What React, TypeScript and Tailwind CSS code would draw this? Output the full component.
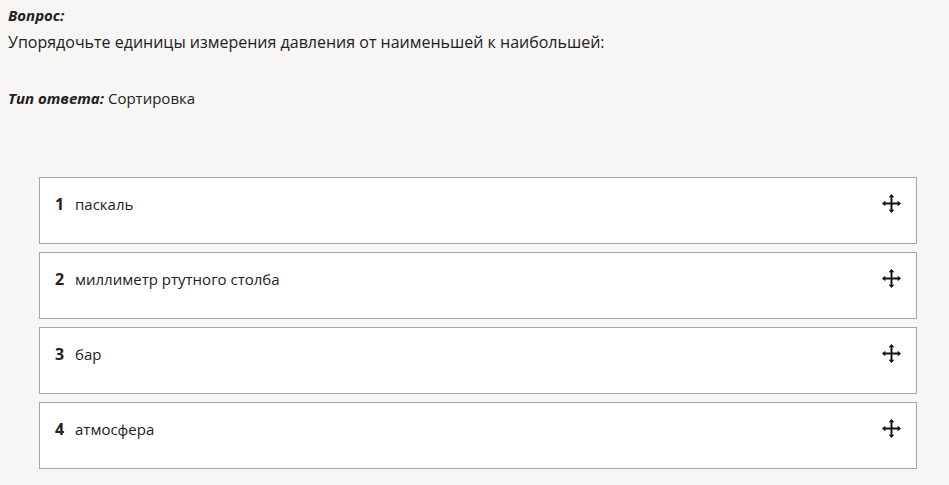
const items = ["паскаль", "миллиметр ртутного столба", "бар", "атмосфера"];

function MoveIcon() {
  return (
    <svg width="21" height="21" viewBox="0 0 22 22" className="text-[#111]">
      <path d="M11 3v16M3 11h16" stroke="currentColor" strokeWidth="2" />
      <path d="M11 1l3 3.5h-6z" fill="currentColor" />
      <path d="M11 21l3-3.5h-6z" fill="currentColor" />
      <path d="M1 11l3.5-3v6z" fill="currentColor" />
      <path d="M21 11l-3.5-3v6z" fill="currentColor" />
    </svg>
  );
}

export default function App() {
  return (
    <div className="min-h-[485px] bg-[#f7f6f5] px-2 pt-[4px] text-[#212121] font-['Open_Sans','Noto_Sans',sans-serif]">
      <div className="text-[15px] font-bold italic leading-[22px]">Вопрос:</div>
      <div className="text-[16px] leading-[24px] mt-[4px]">
        Упорядочьте единицы измерения давления от наименьшей к наибольшей:
      </div>
      <div className="text-[15px] mt-[32px] leading-[24px]">
        <span className="font-bold italic">Тип ответа:</span> Сортировка
      </div>

      <div className="mt-[67px] ml-[31px] mr-[24px] flex flex-col gap-[8px]">
        {items.map((t, i) => (
          <div
            key={i}
            className="h-[67px] bg-white border border-[#a6a6a6] flex items-start pt-[15px] pl-[15px] pr-[14px]"
          >
            <span className="text-[16px] font-bold leading-[22px] w-[20px]">{i + 1}</span>
            <span className="text-[15px] leading-[22px] flex-1">{t}</span>
            <MoveIcon />
          </div>
        ))}
      </div>
    </div>
  );
}
